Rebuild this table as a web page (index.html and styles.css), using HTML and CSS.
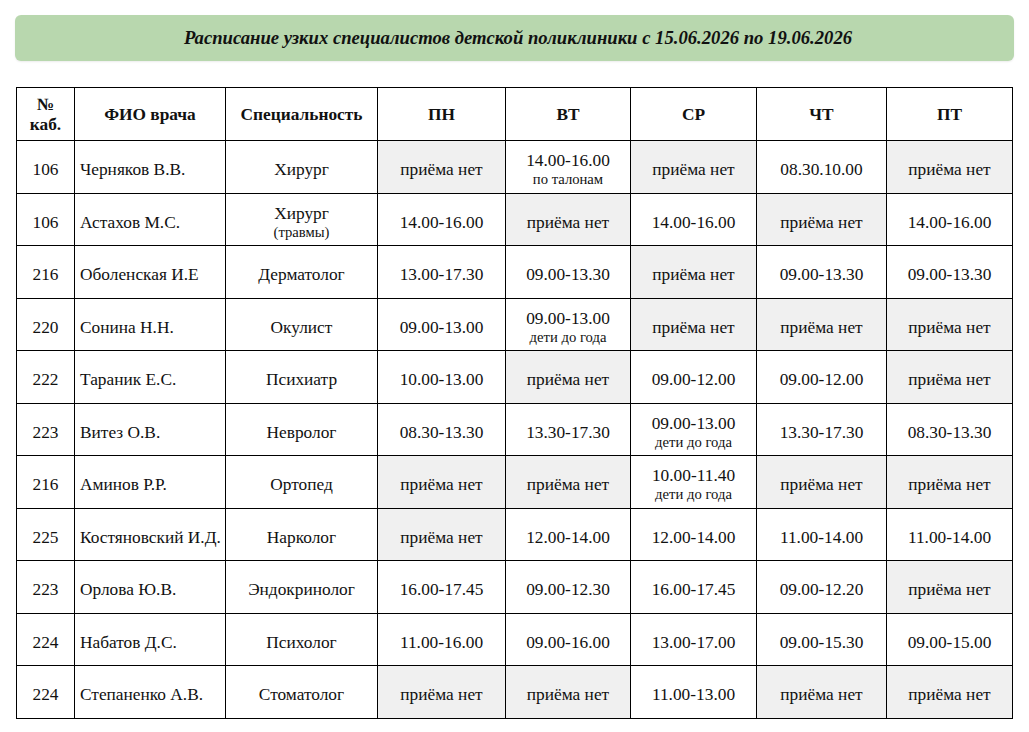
FILE: index.html
```html
<!DOCTYPE html>
<html lang="ru">
<head>
<meta charset="utf-8">
<title>Расписание узких специалистов</title>
<link rel="stylesheet" href="styles.css">
</head>
<body>
<div class="banner">Расписание узких специалистов детской поликлиники с 15.06.2026 по 19.06.2026</div>
<table class="schedule">
  <colgroup>
    <col class="c-room"><col class="c-name"><col class="c-spec">
    <col class="c-day1"><col class="c-day2"><col class="c-day3"><col class="c-day4"><col class="c-day5">
  </colgroup>
  <thead>
    <tr><th>№<br>каб.</th><th>ФИО врача</th><th>Специальность</th><th>ПН</th><th>ВТ</th><th>СР</th><th>ЧТ</th><th>ПТ</th></tr>
  </thead>
  <tbody>
    <tr><td>106</td><td class="name">Черняков В.В.</td><td>Хирург</td><td class="off">приёма нет</td><td>14.00-16.00<span class="note">по талонам</span></td><td class="off">приёма нет</td><td>08.30.10.00</td><td class="off">приёма нет</td></tr>
    <tr><td>106</td><td class="name">Астахов М.С.</td><td>Хирург<span class="note">(травмы)</span></td><td>14.00-16.00</td><td class="off">приёма нет</td><td>14.00-16.00</td><td class="off">приёма нет</td><td>14.00-16.00</td></tr>
    <tr><td>216</td><td class="name">Оболенская И.Е</td><td>Дерматолог</td><td>13.00-17.30</td><td>09.00-13.30</td><td class="off">приёма нет</td><td>09.00-13.30</td><td>09.00-13.30</td></tr>
    <tr><td>220</td><td class="name">Сонина Н.Н.</td><td>Окулист</td><td>09.00-13.00</td><td>09.00-13.00<span class="note">дети до года</span></td><td class="off">приёма нет</td><td class="off">приёма нет</td><td class="off">приёма нет</td></tr>
    <tr><td>222</td><td class="name">Тараник Е.С.</td><td>Психиатр</td><td>10.00-13.00</td><td class="off">приёма нет</td><td>09.00-12.00</td><td>09.00-12.00</td><td class="off">приёма нет</td></tr>
    <tr><td>223</td><td class="name">Витез О.В.</td><td>Невролог</td><td>08.30-13.30</td><td>13.30-17.30</td><td>09.00-13.00<span class="note">дети до года</span></td><td>13.30-17.30</td><td>08.30-13.30</td></tr>
    <tr><td>216</td><td class="name">Аминов Р.Р.</td><td>Ортопед</td><td class="off">приёма нет</td><td class="off">приёма нет</td><td>10.00-11.40<span class="note">дети до года</span></td><td class="off">приёма нет</td><td class="off">приёма нет</td></tr>
    <tr><td>225</td><td class="name">Костяновский И.Д.</td><td>Нарколог</td><td class="off">приёма нет</td><td>12.00-14.00</td><td>12.00-14.00</td><td>11.00-14.00</td><td>11.00-14.00</td></tr>
    <tr><td>223</td><td class="name">Орлова Ю.В.</td><td>Эндокринолог</td><td>16.00-17.45</td><td>09.00-12.30</td><td>16.00-17.45</td><td>09.00-12.20</td><td class="off">приёма нет</td></tr>
    <tr><td>224</td><td class="name">Набатов Д.С.</td><td>Психолог</td><td>11.00-16.00</td><td>09.00-16.00</td><td>13.00-17.00</td><td>09.00-15.30</td><td>09.00-15.00</td></tr>
    <tr><td>224</td><td class="name">Степаненко А.В.</td><td>Стоматолог</td><td class="off">приёма нет</td><td class="off">приёма нет</td><td>11.00-13.00</td><td class="off">приёма нет</td><td class="off">приёма нет</td></tr>
  </tbody>
</table>
</body>
</html>
```
FILE: styles.css
```css
html, body {
  margin: 0;
  padding: 0;
  background: #ffffff;
}
body {
  padding: 15px 15px 0 15px;
  font-family: "Liberation Serif", "Tinos", "Times New Roman", "DejaVu Serif", serif;
  color: #111;
}
.banner {
  width: 999px;
  height: 46px;
  box-sizing: border-box;
  padding-left: 7px;
  background: #b8d7ae;
  border-radius: 6px;
  box-shadow: 0 1px 2px rgba(0,0,0,0.08);
  display: flex;
  align-items: center;
  justify-content: center;
  font-weight: bold;
  font-style: italic;
  font-size: 18.67px;
  color: #111;
}
.schedule {
  margin-top: 26px;
  margin-left: 1px;
  border-collapse: collapse;
  table-layout: fixed;
  width: 996px;
  font-size: 17.33px;
}
.c-room { width: 58px; }
.c-name { width: 151px; }
.c-spec { width: 152px; }
.c-day1 { width: 128px; }
.c-day2 { width: 125px; }
.c-day3 { width: 126px; }
.c-day4 { width: 130px; }
.c-day5 { width: 126px; }
.schedule th,
.schedule td {
  border: 1px solid #000;
  text-align: center;
  vertical-align: middle;
  line-height: 1.15;
}
.schedule th {
  height: 50px;
  padding: 2px 4px 0;
  font-weight: bold;
  font-size: 17.33px;
}
.schedule td {
  height: 44.5px;
  padding: 7px 4px 0;
}
.schedule td.name {
  text-align: left;
  padding-left: 5px;
  white-space: nowrap;
}
.schedule td.off {
  background: #f0f0f0;
}
.note {
  display: block;
  font-size: 14.67px;
  line-height: 1.2;
}
```
